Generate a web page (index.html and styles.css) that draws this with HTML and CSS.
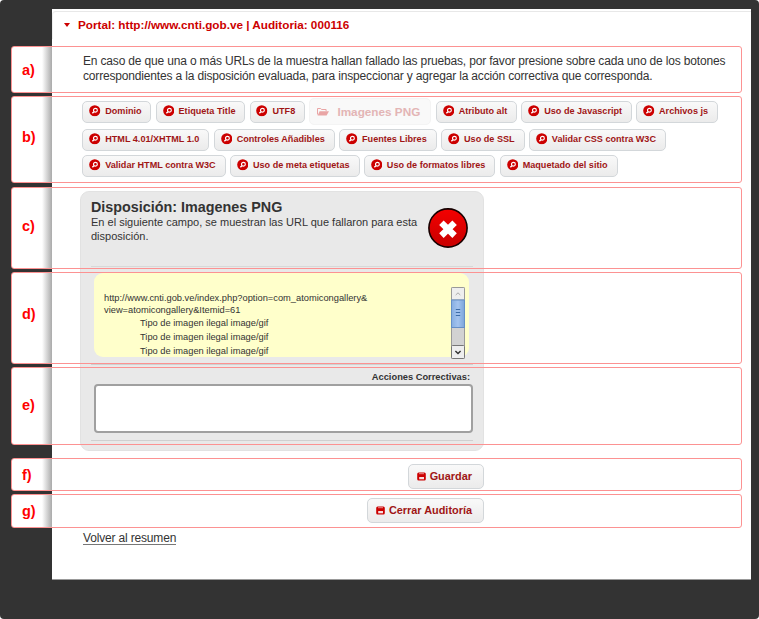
FILE: index.html
```html
<!DOCTYPE html>
<html lang="es">
<head>
<meta charset="utf-8">
<title>Auditoria 000116</title>
<link rel="stylesheet" href="styles.css">
</head>
<body>
<svg class="defs" width="0" height="0">
  <defs>
    <linearGradient id="red" x1="0" y1="0" x2="0" y2="1"><stop offset="0" stop-color="#f40000"/><stop offset="1" stop-color="#c80000"/></linearGradient>
    <symbol id="search" viewBox="0 0 12 12"><circle cx="6" cy="6" r="5.8" fill="#cc0000"/><circle cx="6.7" cy="5.5" r="2" fill="none" stroke="#fff" stroke-width="1.2"/><path d="M5.2 7L3.5 8.6" stroke="#fff" stroke-width="1.5"/></symbol>
    <symbol id="save" viewBox="0 0 9 9"><rect x=".2" y=".4" width="8.6" height="8.2" rx="1.5" fill="#cc0000"/><path d="M2 1.7h5" stroke="#efb0b0" stroke-width=".8"/><path d="M2.2 5h4.8v2.3H2.2z" fill="#f7dede"/></symbol>
  </defs>
</svg>
<main class="sheet">
  <h1 class="portal"><i class="caret"></i>Portal: http://www.cnti.gob.ve | Auditoria: 000116</h1>
  <p class="intro">En caso de que una o más URLs de la muestra hallan fallado las pruebas, por favor presione sobre cada uno de los botones<br>correspondientes a la disposición evaluada, para inspeccionar y agregar la acción correctiva que corresponda.</p>
  <nav class="tests">
    <div class="row first">
      <button class="btn"><svg><use href="#search"/></svg>Dominio</button>
      <button class="btn"><svg><use href="#search"/></svg>Etiqueta Title</button>
      <button class="btn"><svg><use href="#search"/></svg>UTF8</button>
      <button class="btn current"><svg viewBox="0 0 12 9"><path d="M.5 7.5V1.5h3.2l.8 1h4.6v1.6" fill="none" stroke="#e9a5a5" stroke-width="1"/><path d="M2.6 4.3H12L9.6 8.5H.6z" fill="#e9a5a5"/></svg>Imagenes PNG</button>
      <button class="btn"><svg><use href="#search"/></svg>Atributo alt</button>
      <button class="btn"><svg><use href="#search"/></svg>Uso de Javascript</button>
      <button class="btn"><svg><use href="#search"/></svg>Archivos js</button>
    </div>
    <div class="row">
      <button class="btn"><svg><use href="#search"/></svg>HTML 4.01/XHTML 1.0</button>
      <button class="btn"><svg><use href="#search"/></svg>Controles Añadibles</button>
      <button class="btn"><svg><use href="#search"/></svg>Fuentes Libres</button>
      <button class="btn"><svg><use href="#search"/></svg>Uso de SSL</button>
      <button class="btn"><svg><use href="#search"/></svg>Validar CSS contra W3C</button>
    </div>
    <div class="row">
      <button class="btn"><svg><use href="#search"/></svg>Validar HTML contra W3C</button>
      <button class="btn"><svg><use href="#search"/></svg>Uso de meta etiquetas</button>
      <button class="btn"><svg><use href="#search"/></svg>Uso de formatos libres</button>
      <button class="btn"><svg><use href="#search"/></svg>Maquetado del sitio</button>
    </div>
  </nav>
  <section class="panel">
    <header class="head">
      <div>
        <h2>Disposición: Imagenes PNG</h2>
        <p>En el siguiente campo, se muestran las URL que fallaron para esta<br>disposición.</p>
      </div>
      <svg class="close" viewBox="0 0 40 40"><circle cx="20" cy="20" r="19.1" fill="url(#red)" stroke="#160000" stroke-width="1.6"/><path d="M13.4 14.8L26.6 27.6M26.6 14.8L13.4 27.6" stroke="#fff" stroke-width="6.4"/></svg>
    </header>
    <div class="errors">
      <div class="log">
        <p>http://www.cnti.gob.ve/index.php?option=com_atomicongallery&amp;<br>view=atomicongallery&amp;Itemid=61</p>
        <ul><li>Tipo de imagen ilegal image/gif</li><li>Tipo de imagen ilegal image/gif</li><li>Tipo de imagen ilegal image/gif</li></ul>
      </div>
      <svg class="scroll" viewBox="0 0 14 72">
        <defs><linearGradient id="thumb"><stop offset="0" stop-color="#86aee2"/><stop offset=".5" stop-color="#a3c3ee"/><stop offset="1" stop-color="#7ca5da"/></linearGradient></defs>
        <rect x=".5" y=".5" width="13" height="71" rx="1" fill="#d2d2d2" stroke="#999"/>
        <rect x=".5" y=".5" width="13" height="12.5" rx="1" fill="#eee" stroke="#999"/>
        <path d="M4.7 8L7 5.8 9.3 8" fill="none" stroke="#aaa"/>
        <rect x=".5" y="13" width="13" height="27.5" fill="url(#thumb)" stroke="#668fc6"/>
        <path d="M4.8 22.5h4.4M4.8 25.5h4.4M4.8 28.5h4.4" stroke="#3d6da8"/>
        <rect x=".5" y="58.5" width="13" height="13" rx="1" fill="#eee" stroke="#777"/>
        <path d="M4.4 64L7 66.5 9.6 64" fill="none" stroke="#333" stroke-width="1.5"/>
      </svg>
    </div>
    <div class="fix">
      <label for="acc">Acciones Correctivas:</label>
      <textarea id="acc"></textarea>
    </div>
  </section>
  <div class="actions">
    <button class="btn big"><svg><use href="#save"/></svg>Guardar</button>
    <button class="btn big"><svg><use href="#save"/></svg>Cerrar Auditoría</button>
  </div>
  <a class="back">Volver al resumen</a>
</main>
<div class="notes">
  <div class="note a"><b>a)</b></div>
  <div class="note b"><b>b)</b></div>
  <div class="note c"><b>c)</b></div>
  <div class="note d"><b>d)</b></div>
  <div class="note e"><b>e)</b></div>
  <div class="note f"><b>f)</b></div>
  <div class="note g"><b>g)</b></div>
</div>
</body>
</html>
```
FILE: styles.css
```css
* { box-sizing: border-box; }
html { background: #fff; }
body {
  margin: 0; width: 759px; height: 619px; padding: 9px 8px 0 52px;
  background: #333; border-radius: 4px; position: relative; overflow: hidden;
  font-family: "Liberation Sans", Arial, sans-serif; color: #333;
}
h1, h2, p, ul { margin: 0; padding: 0; font-weight: normal; }
ul { list-style: none; }
.defs { position: absolute; }
.sheet { width: 699px; height: 571px; background: #fff; padding: 2px 0 0 30px; border-bottom: 1px solid #999; }
.portal {
  display: flex; align-items: center; gap: 8px; height: 28px; margin-left: -30px; padding: 0 0 2px 11px;
  border-top: 1px solid #e8e8e8; border-left: 1px solid #eee; border-top-left-radius: 4px;
  font-size: 11.72px; font-weight: bold; color: #c00; white-space: nowrap;
}
.caret { border: 3px solid transparent; border-top: 4px solid #c00; border-bottom: 0; }
.intro { font-size: 12px; letter-spacing: -.168px; line-height: 14.5px; margin: 15px 0 0 1px; white-space: nowrap; }
.tests { padding-top: 15px; display: flex; flex-direction: column; gap: 5px; }
.row { display: flex; align-items: center; gap: 4.5px; height: 21px; padding-left: .4px; }
.first { height: 27px; margin-bottom: -1px; gap: 4.6px; }
.btn {
  display: flex; align-items: center; gap: 4.5px; height: 22px; padding: 0 9px 1px 5.8px; flex: none;
  border: 1px solid #d3d7da; border-radius: 5px; background: linear-gradient(#f9f9f9, #ebebeb);
  font: bold 9.1px "Liberation Sans", Arial, sans-serif; color: #a01515; white-space: nowrap;
}
.first .btn { padding-right: 8.6px; }
.btn svg { width: 11.5px; height: 11.5px; }
.first .current { height: 27px; border-color: #f4f4f4; background: #f9f9f9; color: #e3b5b5; font-size: 11.75px; gap: 8px; padding: 0 10px 1px 7px; }
.current svg { width: 12px; height: 9px; }
.panel { width: 404px; height: 260px; margin: 15px 0 0 -2px; padding: 0 10px; background: #e9e9e9; border: 1px solid #e2e2e2; border-radius: 9px; }
.head { height: 75px; display: flex; justify-content: space-between; padding: 6px 5px 0 0; border-bottom: 1px solid #d8d8d8; }
.head h2 { font-size: 14.35px; font-weight: bold; line-height: 18px; }
.head p { font-size: 11px; line-height: 13.5px; white-space: nowrap; }
.close { width: 40px; height: 40px; margin-top: 10px; }
.errors { margin: 6px 4px 0 3px; height: 84px; border-radius: 9px; background: #ffffcb; display: flex; justify-content: space-between; padding: 14px 4px 0 10px; }
.log { font-size: 9.3px; line-height: 12px; padding-top: 5px; white-space: nowrap; }
.log ul { padding: 1px 0 0 36px; line-height: 13.9px; }
.scroll { width: 14px; height: 72px; }
.fix { height: 77px; margin-top: 7px; border: solid #d0d0d0; border-width: 1px 0; padding: 6px 0 0 3px; }
.fix label { display: block; text-align: right; padding-right: 3px; font-size: 9.3px; font-weight: bold; line-height: 13px; }
.fix textarea { display: block; width: 379px; height: 49px; border: 2px solid #a0a0a0; border-radius: 4px; background: #fff; resize: none; }
.actions { width: 402px; display: flex; flex-direction: column; align-items: flex-end; gap: 9px; margin-top: 13px; }
.big { height: 25px; font-size: 10.9px; padding: 0 11px 1px 8px; gap: 4px; }
.big svg { width: 9px; height: 9px; }
.back { display: inline-block; margin: 9px 0 0 1px; font-size: 12px; letter-spacing: -.17px; line-height: 12px; border-bottom: 1px solid #777; }
.notes {
  position: absolute; left: 11px; top: 46px; width: 731px;
  display: flex; flex-direction: column; gap: 3px; pointer-events: none;
}
.note {
  display: flex; align-items: center; padding-left: 10px; border: 1px solid #fc9292; border-radius: 3px; color: #f00; font-size: 14.5px;
  background: linear-gradient(90deg, #fff 0 30px, #aaa 40px, transparent 40px);
}
.a { height: 47px; }
.b { height: 87px; padding-bottom: 6px; }
.c { height: 82px; margin-top: 1px; padding-bottom: 4px; }
.d { height: 92px; padding-bottom: 8px; }
.e { height: 78px; padding-bottom: 2px; }
.f { height: 33px; margin-top: 10px; }
.g { height: 34px; }
```
